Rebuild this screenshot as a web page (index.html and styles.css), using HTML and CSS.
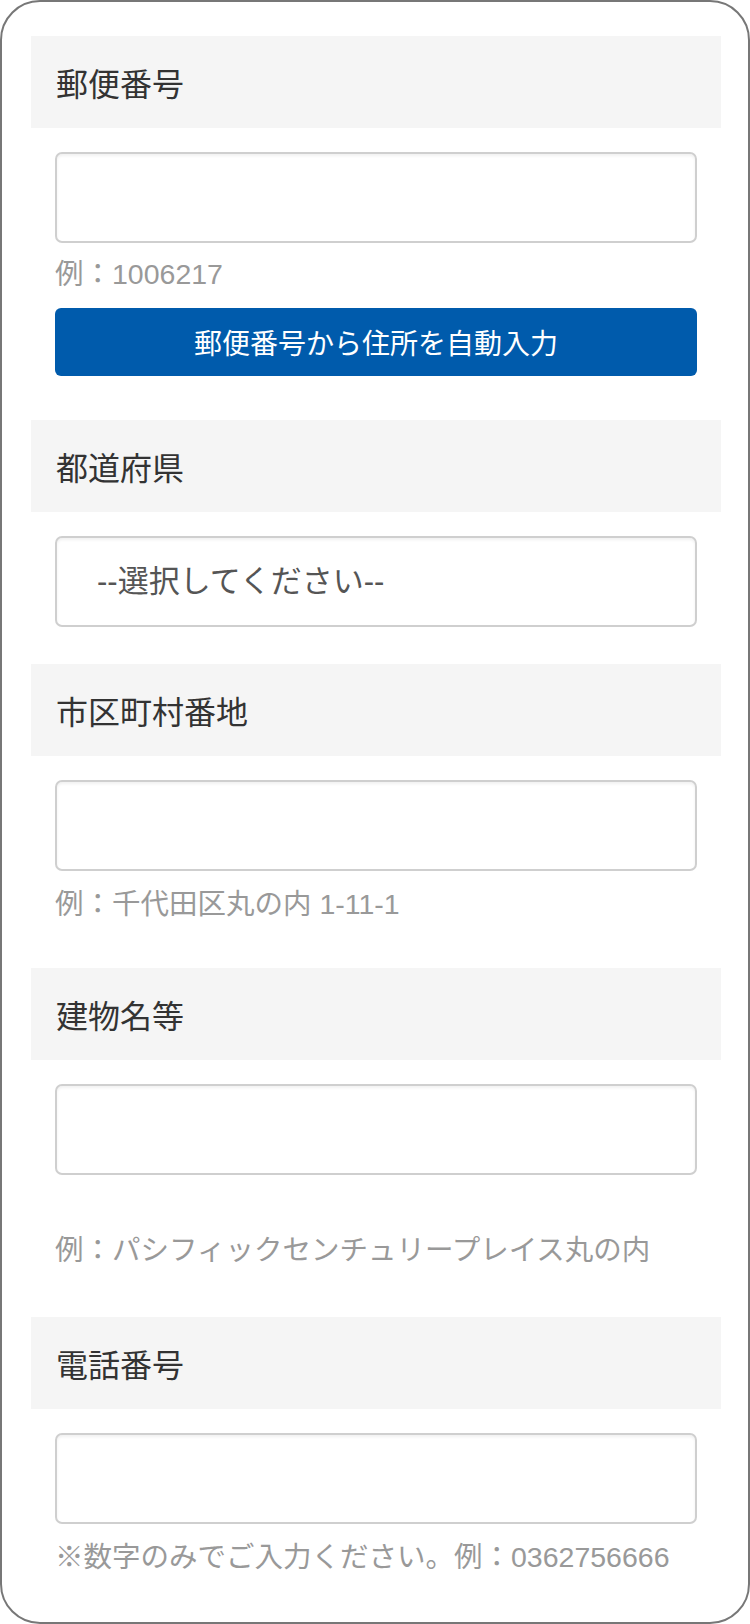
FILE: index.html
```html
<!DOCTYPE html>
<html lang="ja">
<head>
  <meta charset="UTF-8">
  <meta name="viewport" content="width=device-width, initial-scale=1.0">
  <title>住所入力</title>
  <link rel="stylesheet" href="styles.css">
</head>
<body>
  <div class="frame">
    <form class="address-form">

      <div class="field field--zip">
        <div class="field-head">郵便番号</div>
        <div class="field-body">
          <input type="text" class="text-input" id="zip">
          <p class="note note--tight">例：1006217</p>
          <button type="button" class="zip-button">郵便番号から住所を自動入力</button>
        </div>
      </div>

      <div class="field field--pref">
        <div class="field-head">都道府県</div>
        <div class="field-body">
          <select class="select-input" id="pref">
            <option value="">--選択してください--</option>
          </select>
        </div>
      </div>

      <div class="field field--city">
        <div class="field-head">市区町村番地</div>
        <div class="field-body">
          <input type="text" class="text-input" id="city">
          <p class="note">例：千代田区丸の内 1-11-1</p>
        </div>
      </div>

      <div class="field field--building">
        <div class="field-head">建物名等</div>
        <div class="field-body">
          <input type="text" class="text-input" id="building">
          <p class="note note--spaced">例：パシフィックセンチュリープレイス丸の内</p>
        </div>
      </div>

      <div class="field field--tel">
        <div class="field-head">電話番号</div>
        <div class="field-body">
          <input type="tel" class="text-input" id="tel">
          <p class="note">※数字のみでご入力ください。例：0362756666</p>
        </div>
      </div>

    </form>
  </div>
</body>
</html>
```

FILE: styles.css
```css
body {
  margin: 0;
  font-family: "Liberation Sans", "Noto Sans CJK JP", sans-serif;
  color: #333;
  background-color: #fff;
}
.frame {
  box-sizing: border-box;
  width: 750px;
  height: 1624px;
  border: 2px solid #777;
  border-radius: 40px;
  padding: 34px 27px 0 29px;
  overflow: hidden;
}
.field-head {
  display: flex;
  align-items: center;
  height: 92px;
  padding: 0 25px;
  background-color: #f5f5f5;
  font-size: 32px;
  color: #333;
}
.field-body {
  padding: 24px 24px 0;
}
.field--zip {
  margin-bottom: 44px;
}
.field--pref {
  margin-bottom: 37px;
}
.field--city {
  margin-bottom: 43px;
}
.field--building {
  margin-bottom: 46px;
}
.text-input,
.select-input {
  display: block;
  box-sizing: border-box;
  width: 100%;
  height: 91px;
  margin: 0;
  border: 2px solid #cfcfcf;
  border-radius: 7px;
  background-color: #fff;
  box-shadow: inset 0 2px 3px rgba(0, 0, 0, 0.06);
  font-family: inherit;
  outline: none;
}
.text-input {
  padding: 0 20px;
  font-size: 30px;
}
.select-input {
  -webkit-appearance: none;
  appearance: none;
  padding: 0 40px;
  font-size: 31px;
  color: #555;
}
.note {
  margin: 12px 0 0;
  font-size: 28.5px;
  line-height: 42px;
  color: #999;
}
.note--tight {
  margin-top: 10px;
}
.note--spaced {
  margin-top: 54px;
}
.zip-button {
  display: block;
  width: 100%;
  height: 68px;
  margin-top: 13px;
  border: none;
  border-radius: 6px;
  background-color: #005bac;
  color: #fff;
  font-family: inherit;
  font-size: 28px;
  cursor: pointer;
}
```
